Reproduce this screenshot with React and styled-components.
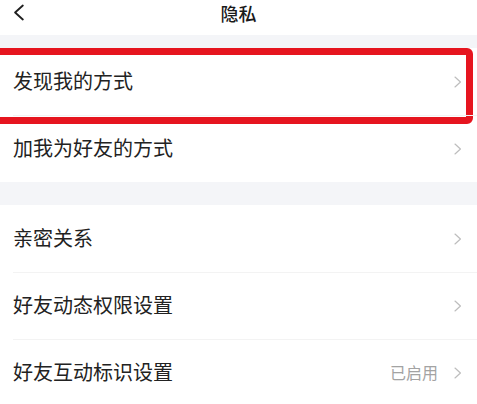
import styled, { createGlobalStyle } from 'styled-components';

const GlobalStyle = createGlobalStyle`
  html, body {
    margin: 0;
    padding: 0;
    background: #ffffff;
  }
  body {
    font-family: "Noto Sans CJK SC", "Noto Sans", sans-serif;
    color: #222222;
  }
`;

const sections = [
  [
    { id: 'discover', label: '发现我的方式', highlight: true },
    { id: 'add', label: '加我为好友的方式' },
  ],
  [
    { id: 'close', label: '亲密关系' },
    { id: 'moments', label: '好友动态权限设置' },
    { id: 'badge', label: '好友互动标识设置', value: '已启用' },
  ],
];

const Chevron = ({ size = 12, color = '#bdbdbd', left }) => (
  <svg width={size * 0.66} height={size} viewBox="0 0 8 12" fill="none">
    <path
      d={left ? 'M7 1L1.5 6L7 11' : 'M1 1L6.5 6L1 11'}
      stroke={color}
      strokeWidth={left ? 1.3 : 1.2}
      strokeLinecap="round"
      strokeLinejoin="round"
    />
  </svg>
);

const App = () => (
  <Page>
    <GlobalStyle />
    <Header>
      <BackButton>
        <Chevron left size={17} color="#1f1f1f" />
      </BackButton>
      <Title>隐私</Title>
    </Header>
    {sections.map((rows, i) => (
      <div key={i}>
        <Gap $height={i === 0 ? 13 : 23} />
        <Section>
          {rows.map(row => (
            <Row key={row.id}>
              <Label>{row.label}</Label>
              <Trail>
                {row.value && <Value>{row.value}</Value>}
                <Chevron />
              </Trail>
              {row.highlight && <Highlight />}
            </Row>
          ))}
        </Section>
      </div>
    ))}
  </Page>
);

export default App;

const Page = styled.div`
  width: 477px;
  height: 404px;
  overflow: hidden;
  background: #ffffff;
`;

const Header = styled.div`
  position: relative;
  height: 35px;
  display: flex;
  align-items: center;
  justify-content: center;
  background: #ffffff;
`;

const BackButton = styled.div`
  position: absolute;
  left: 13px;
  top: 4px;
  display: flex;
`;

const Title = styled.div`
  font-size: 18px;
  font-weight: 500;
  color: #1a1a1a;
  margin-top: -10px;
`;

const Gap = styled.div`
  height: ${p => p.$height}px;
  background: #f4f5f8;
`;

const Section = styled.div`
  background: #ffffff;
`;

const Row = styled.div`
  position: relative;
  height: 67px;
  display: flex;
  align-items: center;
  justify-content: space-between;
  padding: 0 15px 0 13px;

  & + &::before {
    content: '';
    position: absolute;
    top: 0;
    left: 13px;
    right: 0;
    height: 1px;
    background: #f3f3f3;
  }
`;

const Label = styled.span`
  font-size: 20px;
  color: #222222;
  margin-top: -2px;
`;

const Trail = styled.div`
  display: flex;
  align-items: center;
  gap: 16px;
`;

const Value = styled.span`
  font-size: 16px;
  color: #a3a3a3;
  margin-top: -2px;
`;

const Highlight = styled.div`
  position: absolute;
  left: -8px;
  top: 0;
  width: 481px;
  height: 76px;
  box-sizing: border-box;
  border: 7px solid #e6151f;
  border-radius: 6px;
  pointer-events: none;
`;
